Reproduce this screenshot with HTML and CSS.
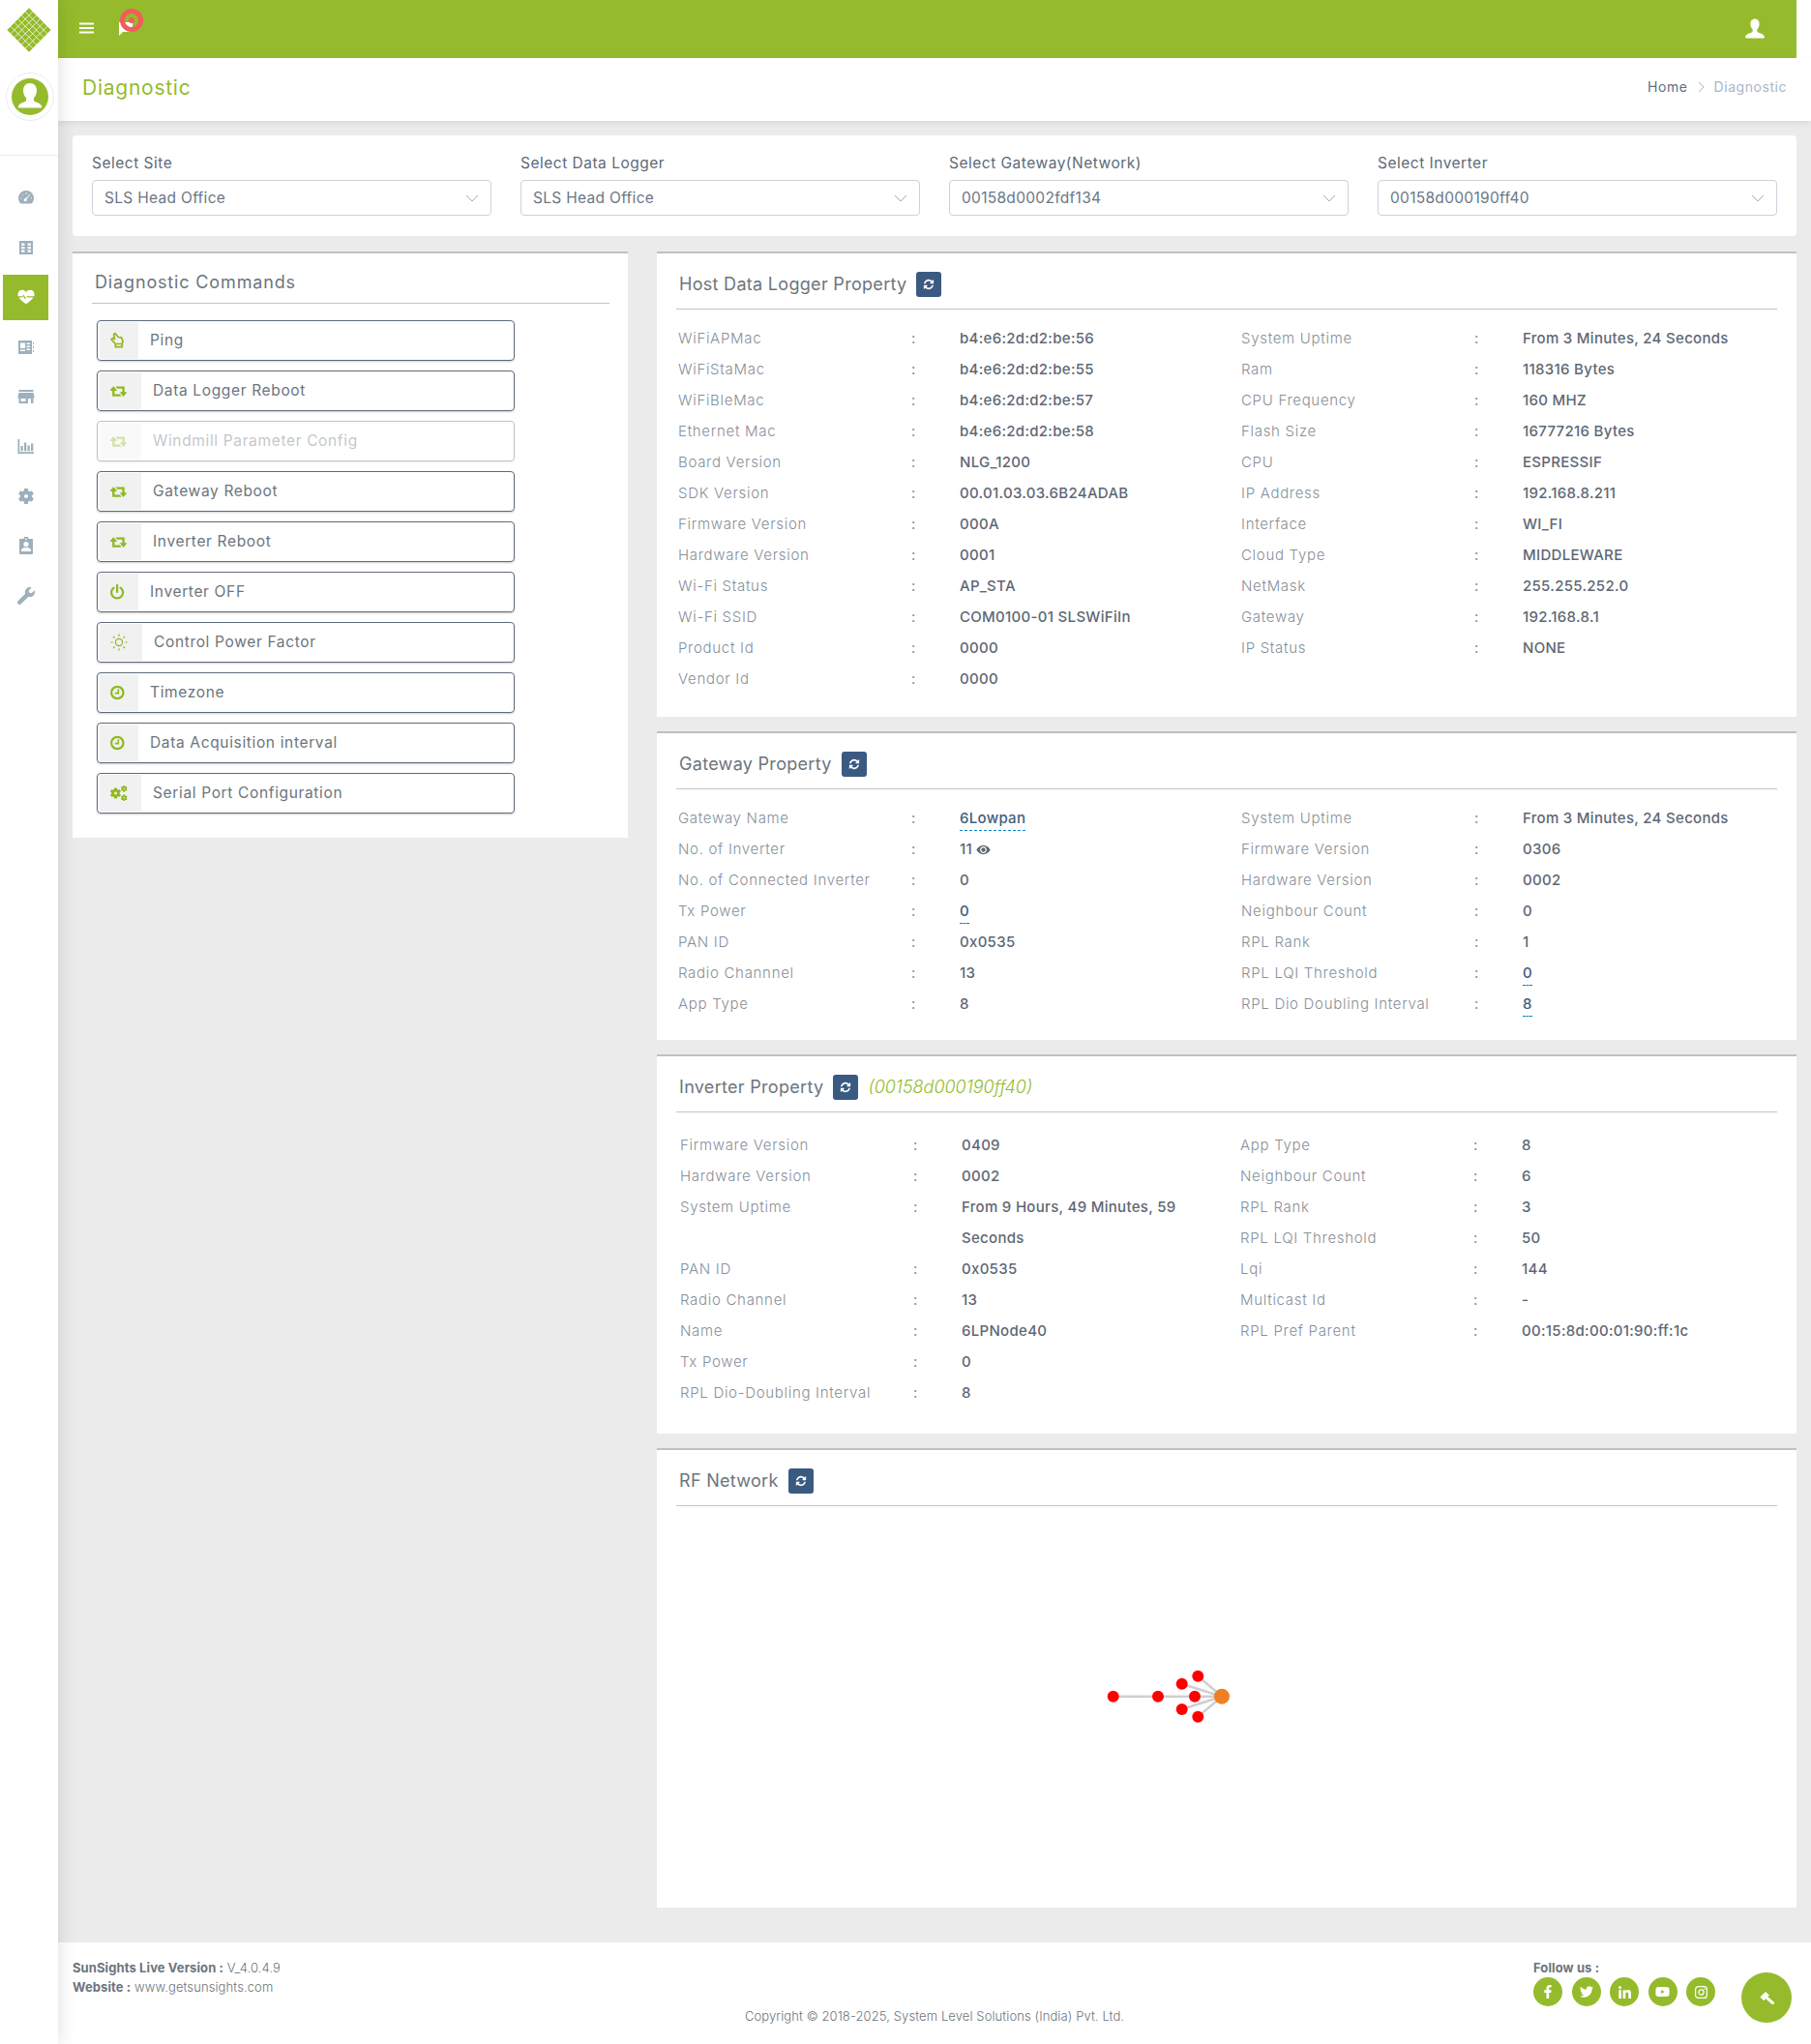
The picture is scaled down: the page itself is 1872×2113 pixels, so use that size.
FILE: index.html
```html
<!DOCTYPE html>
<html lang="en">
<head>
<meta charset="utf-8">
<title>Diagnostic</title>
<link rel="stylesheet" href="styles.css">
</head>
<body>
<svg class="defs" width="0" height="0" aria-hidden="true">
  <symbol id="i-refresh" viewBox="0 0 1792 1792"><path fill="currentColor" d="M1639 1056q0 5-1 7-64 268-268 434.5t-478 166.5q-146 0-282.5-55t-243.5-157l-129 129q-19 19-45 19t-45-19-19-45v-448q0-26 19-45t45-19h448q26 0 45 19t19 45-19 45l-137 137q71 66 161 102t187 36q134 0 250-65t186-179q11-17 53-117 8-23 30-23h192q13 0 22.5 9.5t9.5 22.5zm25-800v448q0 26-19 45t-45 19h-448q-26 0-45-19t-19-45 19-45l138-138q-148-137-349-137-134 0-250 65t-186 179q-11 17-53 117-8 23-30 23h-199q-13 0-22.5-9.5t-9.5-22.5v-7q65-268 270-434.5t480-166.5q146 0 284 55.5t245 156.5l130-129q19-19 45-19t45 19 19 45z"/></symbol>
  <symbol id="i-retweet" viewBox="0 0 1920 1792"><path fill="currentColor" d="M1216 1504q0 13-9.5 22.5t-22.5 9.5h-960q-8 0-13.5-2t-9-7-5.5-8-3-11.5-1-11.5v-600h-192q-26 0-45-19t-19-45q0-24 15-41l320-384q19-22 49-22t49 22l320 384q15 17 15 41 0 26-19 45t-45 19h-192v384h576q16 0 25 11l160 192q7 11 7 21zm640-416q0 24-15 41l-320 384q-20 23-49 23t-49-23l-320-384q-15-17-15-41 0-26 19-45t45-19h192v-384h-576q-16 0-25-12l-160-192q-7-9-7-20 0-13 9.5-22.5t22.5-9.5h960q8 0 13.5 2t9 7 5.5 8.5 3 11.5 1 11.5v600h192q26 0 45 19t19 45z"/></symbol>
  <symbol id="i-clock" viewBox="0 0 18 18"><circle cx="7.300" cy="9" r="6.200" fill="none" stroke="currentColor" stroke-width="2.200"/><path d="M8.300 5.200v4.400H4.800" fill="none" stroke="currentColor" stroke-width="1.600"/></symbol>
  <symbol id="i-user" viewBox="0 0 24 24"><path fill="currentColor" d="M12 1.500c-3 0-4.600 2.400-4.600 5.200 0 2.400 1 4.500 2.300 5.700v1.600c0 .9-.7 1.400-1.600 1.700-2.600.9-5.600 1.800-6 4.600-.1.600.3 1.200 1 1.200h17.800c.7 0 1.100-.6 1-1.200-.4-2.800-3.400-3.700-6-4.600-.9-.3-1.600-.8-1.600-1.700v-1.600c1.300-1.200 2.300-3.300 2.300-5.700 0-2.800-1.600-5.200-4.600-5.200z"/></symbol>
  <symbol id="i-gear" viewBox="0 0 24 24"><path fill="currentColor" d="M19.14,12.94c0.04-0.3,0.06-0.61,0.06-0.94c0-0.32-0.02-0.64-0.07-0.94l2.03-1.58c0.18-0.14,0.23-0.41,0.12-0.61 l-1.92-3.32c-0.12-0.22-0.37-0.29-0.59-0.22l-2.39,0.96c-0.5-0.38-1.03-0.7-1.62-0.94L14.4,2.81c-0.04-0.24-0.24-0.41-0.48-0.41 h-3.84c-0.24,0-0.43,0.17-0.47,0.41L9.25,5.35C8.66,5.59,8.12,5.92,7.63,6.29L5.24,5.33c-0.22-0.08-0.47,0-0.59,0.22L2.74,8.87 C2.62,9.08,2.66,9.34,2.86,9.48l2.03,1.58C4.84,11.36,4.8,11.69,4.8,12s0.02,0.64,0.07,0.94l-2.03,1.58 c-0.18,0.14-0.23,0.41-0.12,0.61l1.92,3.32c0.12,0.22,0.37,0.29,0.59,0.22l2.39-0.96c0.5,0.38,1.03,0.7,1.62,0.94l0.36,2.54 c0.05,0.24,0.24,0.41,0.48,0.41h3.84c0.24,0,0.44-0.17,0.47-0.41l0.36-2.54c0.59-0.24,1.13-0.56,1.62-0.94l2.39,0.96 c0.22,0.08,0.47,0,0.59-0.22l1.92-3.32c0.12-0.22,0.07-0.47-0.12-0.61L19.14,12.94z M12,14.400c-1.320,0-2.400-1.080-2.400-2.400 s1.080-2.400,2.400-2.400s2.400,1.080,2.400,2.400S13.320,14.400,12,14.400z"/></symbol>
  <symbol id="i-chev" viewBox="0 0 14 8"><path d="M1 1l6 6 6-6" fill="none" stroke="currentColor" stroke-width="1"/></symbol>
</svg>

<div class="app">
  <aside class="sidebar">
    <div class="logo">
      <svg width="46" height="46" viewBox="-23 -23 46 46">
        <g transform="rotate(45)">
          <rect x="-16" y="-16" width="32" height="32" fill="#95bb2c"/>
          <path d="M-16-10.700H16M-16-5.300H16M-16 0H16M-16 5.300H16M-16 10.700H16M-10.700-16V16M-5.300-16V16M0-16V16M5.300-16V16M10.700-16V16" stroke="#fff" stroke-width=".7" fill="none"/>
        </g>
      </svg>
    </div>
    <div class="avatar-wrap">
      <div class="avatar">
        <svg width="38" height="38" viewBox="0 0 38 38">
          <circle cx="19" cy="19" r="19" fill="#95bb2c"/>
          <path fill="#fff" d="M19 5c-4.600 0-7 3.500-7 7.500 0 3.200 1.300 6 3.100 7.700v2c0 1.300-1 2-2.300 2.400-2.800 1-5.500 2-6 5.100 0 .3.200.8 1 .8h22.400c.8 0 1-.5 1-.8-.5-3.100-3.200-4.100-6-5.100-1.300-.4-2.300-1.100-2.300-2.400v-2c1.800-1.700 3.100-4.500 3.100-7.700 0-4-2.400-7.500-7-7.500z"/>
        </svg>
      </div>
    </div>
    <nav class="side-nav">
      <a class="nav-item"><svg width="18" height="18" viewBox="0 0 18 18"><path fill="currentColor" fill-rule="evenodd" d="M9 1a8 8 0 0 0-6.400 12.800c.4.500.9.700 1.500.700h9.800c.6 0 1.100-.2 1.500-.7A8 8 0 0 0 9 1zM4 8.200l-.8.300.3 1 1-.3zM5.600 4.700l-.7.600.6.800.8-.6zM9 3.300h-.6v1.200h1.200V3.300zM12.400 4.700l-.8.800.7.700.8-.8zM9.500 10.100l2.700-3.500-.6-.4-3.300 3a1.500 1.500 0 1 0 1.200.9zM14 8.200l-.5 1 1 .3.300-1z"/></svg></a>
      <a class="nav-item"><svg width="16" height="16" viewBox="0 0 16 16"><path fill="currentColor" fill-rule="evenodd" d="M1 1h14v14H1zM3 3.500v2.200h3.500V3.500zM3 7v2.200h3.500V7zM3 10.500v2.200h3.500v-2.200zM9.500 3.500v2.200H13V3.500zM9.500 7v2.200H13V7zM9.500 10.500v2.200H13v-2.200z"/></svg></a>
      <a class="nav-item nav-active"><svg width="18" height="16" viewBox="0 0 18 16"><path fill="currentColor" d="M13 .8c-1.700 0-3 .8-4 2.200C8 1.600 6.700.8 5 .8 2.300.8.400 2.800.4 5.300c0 .7.100 1.300.4 2h4.600l1.100-1.900 2 3.600 1.600-2.400.7.700h6.400c.3-.7.400-1.300.4-2C17.600 2.800 15.700.8 13 .8zM1.500 8.400C3 10.700 6 13.200 9 15.200c3-2 6-4.500 7.500-6.800h-5.800l-.9-.8-1.900 2.900-2-3.500-.7 1.400z"/></svg></a>
      <a class="nav-item"><svg width="18" height="16" viewBox="0 0 18 16"><path fill="currentColor" fill-rule="evenodd" d="M1 1h14v14H1zM3 3.500V9h5V3.500zM9.500 3.500V5H13V3.500zM9.500 6.500V8H13V6.500zM9.500 9.500V11H13V9.500zM3 10.500V12h5v-1.500zM16 3h1v2h-1zM16 7h1v2h-1zM16 11h1v2h-1z"/></svg></a>
      <a class="nav-item"><svg width="18" height="16" viewBox="0 0 18 16"><path fill="currentColor" fill-rule="evenodd" d="M1.500 1h15v2h-15zM1.500 4h15l1 4v1.500h-1V15H1.500V9.500h-1V8zM3.500 10v3h5v-3zM11 10v5h3v-5z"/></svg></a>
      <a class="nav-item"><svg width="17" height="16" viewBox="0 0 17 16"><path fill="currentColor" d="M.500 1h1.700v13.300H17V16H.5zM3.500 8h2.300v5.300H3.500zM7 4.500h2.300v8.800H7zM10.500 7.500h2.300v5.800h-2.300zM14 5.500h2.300v7.800H14z"/></svg></a>
      <a class="nav-item"><svg width="20" height="20"><use href="#i-gear"/></svg></a>
      <a class="nav-item"><svg width="16" height="18" viewBox="0 0 16 18"><path fill="currentColor" fill-rule="evenodd" d="M2 2h3.500a2.500 2.500 0 0 1 5 0H14c.6 0 1 .4 1 1v14c0 .6-.4 1-1 1H2c-.6 0-1-.4-1-1V3c0-.6.4-1 1-1zm6-.6a.9.900 0 1 0 0 1.800.9.900 0 0 0 0-1.800zM8 5a2.600 2.600 0 1 0 0 5.200A2.600 2.600 0 0 0 8 5zM3 13.500V15h10v-1.500c0-1.700-3.300-2.500-5-2.500s-5 .8-5 2.500z"/></svg></a>
      <a class="nav-item"><svg width="18" height="18" viewBox="0 0 512 512"><path fill="currentColor" d="M507.730 109.100c-2.240-9.030-13.540-12.090-20.120-5.510l-74.360 74.360-67.880-11.310-11.310-67.880 74.360-74.360c6.620-6.620 3.430-17.900-5.660-20.160-47.380-11.740-99.550.91-136.580 37.930-39.640 39.640-50.550 97.100-34.050 147.200L18.740 402.760c-24.990 24.990-24.990 65.510 0 90.500 24.990 24.990 65.510 24.990 90.500 0l213.210-213.210c50.120 16.710 107.470 5.680 147.370-34.220 37.070-37.070 49.700-89.320 37.910-136.730z"/></svg></a>
    </nav>
  </aside>

  <div class="main">
    <header class="topbar">
      <div class="top-left">
        <svg class="burger" width="15" height="12" viewBox="0 0 15 12"><path d="M0 1.500h15M0 6h15M0 10.500h15" stroke="#fff" stroke-width="2"/></svg>
        <span class="chat">
          <svg width="16" height="14" viewBox="0 0 16 14"><path fill="#fff" d="M1 0h14v10H5l-4 4z"/></svg>
          <span class="ring"></span>
        </span>
      </div>
      <svg class="top-user" width="24" height="24"><use href="#i-user"/></svg>
    </header>

    <div class="page-head">
      <h1 class="page-title">Diagnostic</h1>
      <div class="crumbs"><a class="crumb-home">Home</a><svg class="crumb-sep" width="7" height="12" viewBox="0 0 7 12"><path d="M1 1l5 5-5 5" fill="none" stroke="currentColor"/></svg><span class="crumb-cur">Diagnostic</span></div>
    </div>

    <main class="content">
      <section class="filters">
        <div class="field"><label class="field-label">Select Site</label><div class="select"><span>SLS Head Office</span><svg width="14" height="8"><use href="#i-chev"/></svg></div></div>
        <div class="field"><label class="field-label">Select Data Logger</label><div class="select"><span>SLS Head Office</span><svg width="14" height="8"><use href="#i-chev"/></svg></div></div>
        <div class="field"><label class="field-label">Select Gateway(Network)</label><div class="select"><span>00158d0002fdf134</span><svg width="14" height="8"><use href="#i-chev"/></svg></div></div>
        <div class="field"><label class="field-label">Select Inverter</label><div class="select"><span>00158d000190ff40</span><svg width="14" height="8"><use href="#i-chev"/></svg></div></div>
      </section>

      <div class="columns">
        <section class="card commands">
          <h2 class="card-title commands-title">Diagnostic Commands</h2>
          <div class="cmd-list">
            <a class="cmd"><span class="cmd-icon"><svg width="18" height="18" viewBox="0 0 18 18"><path d="M5 1.500l3.200 4 3.300.4 1.500 3.500-.7 3.100H5.300L1 7.800l1.500-1.200 2 1-.9-5zM5.300 12.500v3.200h7v-3.200" fill="none" stroke="currentColor" stroke-width="1.700" stroke-linejoin="round"/></svg></span><span class="cmd-text">Ping</span></a>
            <a class="cmd"><span class="cmd-icon"><svg class="ico-r" width="18" height="16"><use href="#i-retweet"/></svg></span><span class="cmd-text">Data Logger Reboot</span></a>
            <a class="cmd cmd-off"><span class="cmd-icon"><svg class="ico-r" width="18" height="16"><use href="#i-retweet"/></svg></span><span class="cmd-text">Windmill Parameter Config</span></a>
            <a class="cmd"><span class="cmd-icon"><svg class="ico-r" width="18" height="16"><use href="#i-retweet"/></svg></span><span class="cmd-text">Gateway Reboot</span></a>
            <a class="cmd"><span class="cmd-icon"><svg class="ico-r" width="18" height="16"><use href="#i-retweet"/></svg></span><span class="cmd-text">Inverter Reboot</span></a>
            <a class="cmd"><span class="cmd-icon"><svg width="18" height="16" viewBox="0 0 18 16"><path d="M3.600 3.600a6 6 0 1 0 7 0M7.100 1v7" fill="none" stroke="currentColor" stroke-width="2.200" stroke-linecap="round"/></svg></span><span class="cmd-text">Inverter OFF</span></a>
            <a class="cmd"><span class="cmd-icon"><svg class="ico-s" width="18" height="18" viewBox="0 0 18 18"><circle cx="9" cy="9" r="3.600" fill="none" stroke="currentColor" stroke-width="1.200"/><path d="M9 .5v2.200M9 15.300v2.200M.5 9h2.200M15.300 9h2.200M3 3l1.500 1.500M13.500 13.500L15 15M3 15l1.500-1.500M13.500 4.500L15 3" stroke="currentColor" stroke-width="1.200"/></svg></span><span class="cmd-text">Control Power Factor</span></a>
            <a class="cmd"><span class="cmd-icon"><svg width="18" height="18"><use href="#i-clock"/></svg></span><span class="cmd-text">Timezone</span></a>
            <a class="cmd"><span class="cmd-icon"><svg width="18" height="18"><use href="#i-clock"/></svg></span><span class="cmd-text">Data Acquisition interval</span></a>
            <a class="cmd"><span class="cmd-icon"><svg class="ico-r" width="18" height="16" viewBox="0 0 18 16"><use href="#i-gear" x="-1.500" y="1" width="14" height="14"/><use href="#i-gear" x="10" y="-1" width="8.500" height="8.500"/><use href="#i-gear" x="10" y="8.500" width="8.500" height="8.500"/></svg></span><span class="cmd-text">Serial Port Configuration</span></a>
          </div>
        </section>

        <div class="stack">
          <section class="card prop-card host">
            <div class="prop-head"><h2 class="card-title">Host Data Logger Property</h2><button class="refresh"><svg width="12" height="12"><use href="#i-refresh"/></svg></button></div>
            <div class="props">
              <dl class="prop-col">
                <div class="prop"><dt>WiFiAPMac</dt><dd class="sep">:</dd><dd class="val">b4:e6:2d:d2:be:56</dd></div>
                <div class="prop"><dt>WiFiStaMac</dt><dd class="sep">:</dd><dd class="val">b4:e6:2d:d2:be:55</dd></div>
                <div class="prop"><dt>WiFiBleMac</dt><dd class="sep">:</dd><dd class="val">b4:e6:2d:d2:be:57</dd></div>
                <div class="prop"><dt>Ethernet Mac</dt><dd class="sep">:</dd><dd class="val">b4:e6:2d:d2:be:58</dd></div>
                <div class="prop"><dt>Board Version</dt><dd class="sep">:</dd><dd class="val">NLG_1200</dd></div>
                <div class="prop"><dt>SDK Version</dt><dd class="sep">:</dd><dd class="val">00.01.03.03.6B24ADAB</dd></div>
                <div class="prop"><dt>Firmware Version</dt><dd class="sep">:</dd><dd class="val">000A</dd></div>
                <div class="prop"><dt>Hardware Version</dt><dd class="sep">:</dd><dd class="val">0001</dd></div>
                <div class="prop"><dt>Wi-Fi Status</dt><dd class="sep">:</dd><dd class="val">AP_STA</dd></div>
                <div class="prop"><dt>Wi-Fi SSID</dt><dd class="sep">:</dd><dd class="val">COM0100-01 SLSWiFiIn</dd></div>
                <div class="prop"><dt>Product Id</dt><dd class="sep">:</dd><dd class="val">0000</dd></div>
                <div class="prop"><dt>Vendor Id</dt><dd class="sep">:</dd><dd class="val">0000</dd></div>
              </dl>
              <dl class="prop-col">
                <div class="prop"><dt>System Uptime</dt><dd class="sep">:</dd><dd class="val">From 3 Minutes, 24 Seconds</dd></div>
                <div class="prop"><dt>Ram</dt><dd class="sep">:</dd><dd class="val">118316 Bytes</dd></div>
                <div class="prop"><dt>CPU Frequency</dt><dd class="sep">:</dd><dd class="val">160 MHZ</dd></div>
                <div class="prop"><dt>Flash Size</dt><dd class="sep">:</dd><dd class="val">16777216 Bytes</dd></div>
                <div class="prop"><dt>CPU</dt><dd class="sep">:</dd><dd class="val">ESPRESSIF</dd></div>
                <div class="prop"><dt>IP Address</dt><dd class="sep">:</dd><dd class="val">192.168.8.211</dd></div>
                <div class="prop"><dt>Interface</dt><dd class="sep">:</dd><dd class="val">WI_FI</dd></div>
                <div class="prop"><dt>Cloud Type</dt><dd class="sep">:</dd><dd class="val">MIDDLEWARE</dd></div>
                <div class="prop"><dt>NetMask</dt><dd class="sep">:</dd><dd class="val">255.255.252.0</dd></div>
                <div class="prop"><dt>Gateway</dt><dd class="sep">:</dd><dd class="val">192.168.8.1</dd></div>
                <div class="prop"><dt>IP Status</dt><dd class="sep">:</dd><dd class="val">NONE</dd></div>
              </dl>
            </div>
          </section>

          <section class="card prop-card gateway">
            <div class="prop-head"><h2 class="card-title">Gateway Property</h2><button class="refresh"><svg width="12" height="12"><use href="#i-refresh"/></svg></button></div>
            <div class="props">
              <dl class="prop-col">
                <div class="prop"><dt>Gateway Name</dt><dd class="sep">:</dd><dd class="val"><a class="editable">6Lowpan</a></dd></div>
                <div class="prop"><dt>No. of Inverter</dt><dd class="sep">:</dd><dd class="val">11 <svg class="eye" width="15" height="11" viewBox="0 0 15 11"><path fill="currentColor" fill-rule="evenodd" d="M7.500.8C4.200.8 1.700 3 .3 5.500c1.400 2.500 3.900 4.700 7.200 4.700s5.800-2.200 7.200-4.700C13.300 3 10.800.8 7.500.8zm0 1.200c1.900 0 3.400 1.600 3.400 3.500S9.400 9 7.500 9 4.100 7.400 4.100 5.500 5.600 2 7.500 2zm0 1.300a2.200 2.200 0 1 0 0 4.400 2.200 2.200 0 0 0 0-4.400z"/></svg></dd></div>
                <div class="prop"><dt>No. of Connected Inverter</dt><dd class="sep">:</dd><dd class="val">0</dd></div>
                <div class="prop"><dt>Tx Power</dt><dd class="sep">:</dd><dd class="val"><a class="editable">0</a></dd></div>
                <div class="prop"><dt>PAN ID</dt><dd class="sep">:</dd><dd class="val">0x0535</dd></div>
                <div class="prop"><dt>Radio Channnel</dt><dd class="sep">:</dd><dd class="val">13</dd></div>
                <div class="prop"><dt>App Type</dt><dd class="sep">:</dd><dd class="val">8</dd></div>
              </dl>
              <dl class="prop-col">
                <div class="prop"><dt>System Uptime</dt><dd class="sep">:</dd><dd class="val">From 3 Minutes, 24 Seconds</dd></div>
                <div class="prop"><dt>Firmware Version</dt><dd class="sep">:</dd><dd class="val">0306</dd></div>
                <div class="prop"><dt>Hardware Version</dt><dd class="sep">:</dd><dd class="val">0002</dd></div>
                <div class="prop"><dt>Neighbour Count</dt><dd class="sep">:</dd><dd class="val">0</dd></div>
                <div class="prop"><dt>RPL Rank</dt><dd class="sep">:</dd><dd class="val">1</dd></div>
                <div class="prop"><dt>RPL LQI Threshold</dt><dd class="sep">:</dd><dd class="val"><a class="editable">0</a></dd></div>
                <div class="prop"><dt>RPL Dio Doubling Interval</dt><dd class="sep">:</dd><dd class="val"><a class="editable">8</a></dd></div>
              </dl>
            </div>
          </section>

          <section class="card prop-card inverter">
            <div class="prop-head"><h2 class="card-title">Inverter Property</h2><button class="refresh"><svg width="12" height="12"><use href="#i-refresh"/></svg></button><em class="inv-id">(00158d000190ff40)</em></div>
            <div class="props props-inv">
              <dl class="prop-col">
                <div class="prop"><dt>Firmware Version</dt><dd class="sep">:</dd><dd class="val">0409</dd></div>
                <div class="prop"><dt>Hardware Version</dt><dd class="sep">:</dd><dd class="val">0002</dd></div>
                <div class="prop"><dt>System Uptime</dt><dd class="sep">:</dd><dd class="val">From 9 Hours, 49 Minutes, 59 Seconds</dd></div>
                <div class="prop"><dt>PAN ID</dt><dd class="sep">:</dd><dd class="val">0x0535</dd></div>
                <div class="prop"><dt>Radio Channel</dt><dd class="sep">:</dd><dd class="val">13</dd></div>
                <div class="prop"><dt>Name</dt><dd class="sep">:</dd><dd class="val">6LPNode40</dd></div>
                <div class="prop"><dt>Tx Power</dt><dd class="sep">:</dd><dd class="val">0</dd></div>
                <div class="prop"><dt>RPL Dio-Doubling Interval</dt><dd class="sep">:</dd><dd class="val">8</dd></div>
              </dl>
              <dl class="prop-col">
                <div class="prop"><dt>App Type</dt><dd class="sep">:</dd><dd class="val">8</dd></div>
                <div class="prop"><dt>Neighbour Count</dt><dd class="sep">:</dd><dd class="val">6</dd></div>
                <div class="prop"><dt>RPL Rank</dt><dd class="sep">:</dd><dd class="val">3</dd></div>
                <div class="prop"><dt>RPL LQI Threshold</dt><dd class="sep">:</dd><dd class="val">50</dd></div>
                <div class="prop"><dt>Lqi</dt><dd class="sep">:</dd><dd class="val">144</dd></div>
                <div class="prop"><dt>Multicast Id</dt><dd class="sep">:</dd><dd class="val">-</dd></div>
                <div class="prop"><dt>RPL Pref Parent</dt><dd class="sep">:</dd><dd class="val">00:15:8d:00:01:90:ff:1c</dd></div>
              </dl>
            </div>
          </section>

          <section class="card prop-card rf">
            <div class="prop-head"><h2 class="card-title">RF Network</h2><button class="refresh"><svg width="12" height="12"><use href="#i-refresh"/></svg></button></div>
            <svg class="graph" width="1178" height="415" viewBox="679 1557 1178 415">
              <g stroke="#cfcfcf" stroke-width="2.500">
                <path d="M1150.700 1753.700H1263M1221.700 1740.700L1263 1753.700M1238.300 1732.700L1263 1753.700M1221.700 1767L1263 1753.700M1238.300 1774.700L1263 1753.700"/>
              </g>
              <g fill="#ff0000">
                <circle cx="1150.700" cy="1753.700" r="6"/><circle cx="1197" cy="1753.700" r="6"/><circle cx="1235" cy="1753.700" r="6"/><circle cx="1221.700" cy="1740.700" r="6"/><circle cx="1238.300" cy="1732.700" r="6"/><circle cx="1221.700" cy="1767" r="6"/><circle cx="1238.300" cy="1774.700" r="6"/>
              </g>
              <circle cx="1263" cy="1753.700" r="8" fill="#ee7f22"/>
            </svg>
          </section>
        </div>
      </div>
    </main>

    <footer class="footer">
      <div class="foot-top">
        <div class="foot-info">
          <p><b>SunSights Live Version :</b> V_4.0.4.9</p>
          <p><b>Website :</b> www.getsunsights.com</p>
        </div>
        <div class="foot-social">
          <b>Follow us :</b>
          <div class="socials">
            <a class="social"><svg width="14" height="14" viewBox="0 0 320 512"><path fill="#fff" d="M279.140 288l14.220-92.660h-88.910v-60.130c0-25.350 12.420-50.060 52.240-50.060h40.420V6.260S260.430 0 225.360 0c-73.220 0-121.080 44.380-121.080 124.720v70.620H22.890V288h81.390v224h100.170V288z"/></svg></a>
            <a class="social"><svg width="14" height="14" viewBox="0 0 512 512"><path fill="#fff" d="M459.370 151.716c.325 4.548.325 9.097.325 13.645 0 138.720-105.583 298.558-298.558 298.558-59.452 0-114.680-17.219-161.137-47.106 8.447.974 16.568 1.299 25.340 1.299 49.055 0 94.213-16.568 130.274-44.832-46.132-.975-84.792-31.188-98.112-72.772 6.498.974 12.995 1.624 19.818 1.624 9.421 0 18.843-1.300 27.614-3.573-48.081-9.747-84.143-51.980-84.143-102.985v-1.299c13.969 7.797 30.214 12.670 47.431 13.319-28.264-18.843-46.781-51.005-46.781-87.391 0-19.492 5.197-37.360 14.294-52.954 51.655 63.675 129.300 105.258 216.365 109.807-1.624-7.797-2.599-15.918-2.599-24.040 0-57.828 46.782-104.934 104.934-104.934 30.213 0 57.502 12.670 76.670 33.137 23.715-4.548 46.456-13.320 66.599-25.340-7.798 24.366-24.366 44.833-46.132 57.827 21.117-2.273 41.584-8.122 60.426-16.243-14.292 20.791-32.161 39.308-52.628 54.253z"/></svg></a>
            <a class="social"><svg width="13" height="13" viewBox="0 0 448 448"><path fill="#fff" d="M100.280 448H7.400V148.900h92.880zM53.790 108.100C24.090 108.100 0 83.500 0 53.800a53.790 53.790 0 0 1 107.580 0c0 29.700-24.100 54.300-53.790 54.300zM447.900 448h-92.680V302.400c0-34.700-.7-79.200-48.290-79.200-48.290 0-55.690 37.700-55.690 76.700V448h-92.780V148.900h89.080v40.800h1.300c12.400-23.500 42.690-48.300 87.880-48.300 94 0 111.280 61.900 111.280 142.300V448z"/></svg></a>
            <a class="social"><svg width="15" height="14" viewBox="0 0 576 512"><path fill="#fff" d="M549.655 124.083c-6.281-23.650-24.787-42.276-48.284-48.597C458.781 64 288 64 288 64S117.220 64 74.629 75.486c-23.497 6.322-42.003 24.947-48.284 48.597-11.412 42.867-11.412 132.305-11.412 132.305s0 89.438 11.412 132.305c6.281 23.650 24.787 41.500 48.284 47.821C117.220 448 288 448 288 448s170.780 0 213.371-11.486c23.497-6.321 42.003-24.171 48.284-47.821 11.412-42.867 11.412-132.305 11.412-132.305s0-89.438-11.412-132.305zm-317.510 213.508V175.185l142.739 81.205-142.739 81.201z"/></svg></a>
            <a class="social"><svg width="13" height="13" viewBox="0 0 13 13"><rect x=".6" y=".6" width="11.800" height="11.800" rx="3" fill="none" stroke="#fff" stroke-width="1.200"/><circle cx="6.500" cy="6.500" r="2.600" fill="none" stroke="#fff" stroke-width="1.200"/><circle cx="10" cy="3" r=".8" fill="#fff"/></svg></a>
          </div>
        </div>
      </div>
      <p class="copyright">Copyright © 2018-2025, System Level Solutions (India) Pvt. Ltd.</p>
      <a class="fab"><svg width="15" height="14" viewBox="0 0 15 14"><path fill="#fff" d="M.4 6.600L6 1l3.800 3.600-5.600 5.600z"/><path d="M7.500 7.300l6 5.300" stroke="#fff" stroke-width="3" stroke-linecap="round"/></svg></a>
    </footer>
  </div>
</div>
</body>
</html>
```

FILE: styles.css
```css
* { box-sizing: border-box; }
html, body { margin: 0; padding: 0; }
body {
  font-family: Inter, "Liberation Sans", sans-serif;
  font-size: 15px;
  letter-spacing: .55px;
  color: #6c757d;
  background: #ebebeb;
}
p, h1, h2, dl, dd, dt { margin: 0; padding: 0; font-weight: inherit; }
.defs { position: absolute; }

.app { display: flex; min-height: 2113px; }

.sidebar {
  width: 60px;
  flex: none;
  background: #fff;
  box-shadow: 0 0 18px rgba(0,0,0,.14);
  position: relative;
  z-index: 2;
}
.logo { height: 60px; display: flex; align-items: center; justify-content: center; padding: 2px 0 0; }
.avatar-wrap {
  height: 101px;
  border-bottom: 1px solid #ececec;
  padding: 15px 0 0 6px;
}
.avatar {
  width: 50px; height: 50px;
  border-radius: 50%;
  border: 1px solid #ececec;
  display: flex; align-items: center; justify-content: center;
}
.side-nav { padding: 20px 0 0 3px; display: flex; flex-direction: column; gap: 4.400px; }
.nav-item {
  width: 47px; height: 47px;
  display: flex; align-items: center; justify-content: center;
  color: #9db0bc;
}
.nav-active { background: #95bb2c; color: #fff; }

.main { flex: 1; min-width: 0; display: flex; flex-direction: column; position: relative; }

.topbar {
  height: 60px;
  border-right: 15px solid #fff;
  background: #95bb2c;
  display: flex; align-items: center; justify-content: space-between;
  padding: 0 31px 0 22px;
}
.top-left { display: flex; align-items: center; gap: 25px; }
.burger { margin-top: -2px; }
.chat { position: relative; display: block; height: 14px; margin-top: -1px; }
.chat svg { display: block; }
.ring {
  position: absolute; left: 2px; top: -14px;
  width: 24px; height: 24px;
  border-radius: 50%;
  border: 5px solid #f25c5c;
}
.ring::after {
  content: "";
  position: absolute; left: 4px; top: 4px;
  width: 6px; height: 6px;
  border-radius: 50%;
  background: #f25c5c;
}
.top-user { color: #fff; }

.page-head {
  height: 65px;
  background: #fff;
  box-shadow: 0 2px 6px rgba(0,0,0,.08);
  display: flex; align-items: center; justify-content: space-between;
  padding: 0 25px 5px 25px;
  position: relative;
  z-index: 1;
}
.page-title { font-size: 21px; color: #95bb2c; font-weight: 400; letter-spacing: .75px; }
.crumbs { display: flex; align-items: center; gap: 10px; font-size: 14px; letter-spacing: .55px; margin-top: -1px; }
.crumb-home { color: #5b6f86; }
.crumb-sep { color: #a9b6c6; }
.crumb-cur { color: #a9b6c6; }

.content { flex: 1; padding: 15px 15px 36px; display: flex; flex-direction: column; gap: 16px; }

.card { background: #fff; border-top: 2px solid #c0c0c0; padding: 0 20px; }

.filters {
  height: 104px;
  background: #fff;
  border-radius: 4px;
  padding: 18px 20px 0;
  display: grid;
  grid-template-columns: repeat(4, 1fr);
  column-gap: 30px;
}
.field-label { display: block; height: 28px; line-height: 21px; font-size: 15.500px; color: #5d6b7a; letter-spacing: .5px; }
.select {
  height: 37px;
  border: 1px solid #ced1da;
  border-radius: 4px;
  display: flex; align-items: center; justify-content: space-between;
  padding: 0 12px;
  font-size: 15.500px;
  color: #6b7785;
  letter-spacing: .3px;
}
.select svg { color: #a5adba; }

.columns { display: grid; grid-template-columns: 574px 1178px; column-gap: 30px; align-items: start; }

.commands { height: 606px; }
.card-title { font-size: 18px; font-weight: 400; color: #6c757d; letter-spacing: .3px; }
.commands-title { height: 52px; line-height: 60px; border-bottom: 1px solid #c4c4c4; margin: 0; padding-left: 3px; margin-right: -1px; letter-spacing: .85px; }
.cmd-list { padding: 17px 0 0 5px; display: flex; flex-direction: column; gap: 10px; }
.cmd {
  width: 432px; height: 42px;
  border: 1px solid #5f6b7a;
  border-radius: 4px;
  box-shadow: 0 1px 2px rgba(0,0,0,.2);
  padding: 1px 0 1px 2px;
  display: flex; align-items: stretch;
  font-size: 15.500px;
  color: #6c757d;
  letter-spacing: .65px;
}
.cmd-off { opacity: .4; }
.cmd-icon {
  background: #f1f1f1;
  color: #8fb822;
  padding: 0 11px;
  display: flex; align-items: center;
}
.cmd-icon svg { display: block; flex: none; }
.ico-r { margin-right: 3px; }
.ico-s { margin-right: 4px; }
.cmd-text { align-self: center; padding: 0 0 2px 12px; }

.stack { display: flex; flex-direction: column; gap: 15px; }
.prop-card { padding: 0 14px 0 20px; }
.host { height: 481px; }
.gateway { height: 319px; }
.inverter { height: 392px; }
.rf { height: 475px; position: relative; }
.prop-head {
  height: 58px;
  border-bottom: 1px solid #c4c4c4;
  display: flex; align-items: center; gap: 10px;
  padding: 6px 0 0 3px;
  margin-right: 6px;
}
.refresh {
  width: 26px; height: 26px;
  border: 0; border-radius: 3px;
  background: #3a5a82;
  color: #fff;
  display: flex; align-items: center; justify-content: center;
  padding: 0;
  margin-top: 1px;
}
.inv-id { color: #95bb2c; font-size: 18px; font-style: italic; font-weight: 300; letter-spacing: 0; margin-top: -1px; }

.props { display: grid; grid-template-columns: 582px 1fr; padding: 14px 0 0 2px; }
.props-inv { padding: 18px 0 0 4px; grid-template-columns: 579px 1fr; }
.prop-col { padding-right: 30px; }
.prop {
  display: grid;
  grid-template-columns: 243px 48px 1fr;
  line-height: 32px;
  font-size: 15px;
}
.prop dt { color: #87909a; font-weight: 300; white-space: nowrap; letter-spacing: .7px; }
.prop .sep { color: #87909a; margin-left: -2px; }
.prop .val { color: #5e6875; font-weight: 500; letter-spacing: .3px; }
.editable { color: #41607e; border-bottom: 1px dashed #0a84c6; display: inline-block; line-height: 24px; }
.eye { vertical-align: -1px; }

.graph { position: absolute; left: 0; bottom: 0; display: block; }

.footer {
  height: 105px;
  background: #fff;
  padding: 16px 99px 0 15px;
  font-size: 13px;
  letter-spacing: .1px;
  color: #6c757d;
  position: relative;
}
.foot-top { display: flex; justify-content: space-between; height: 48px; }
.foot-info { line-height: 20px; font-weight: 300; }
.foot-info b { font-weight: 700; }
.foot-social b { display: block; line-height: 20px; font-weight: 700; }
.socials { display: flex; gap: 9.500px; }
.social {
  width: 30px; height: 30px;
  border-radius: 50%;
  background: #95bb2c;
  display: flex; align-items: center; justify-content: center;
}
.copyright { text-align: center; padding-top: 2px; line-height: 20px; font-weight: 300; margin-right: -84px; }
.fab {
  position: absolute; right: 20px; bottom: 22px;
  width: 52px; height: 52px;
  border-radius: 50%;
  background: #95bb2c;
  display: flex; align-items: center; justify-content: center;
}
```
